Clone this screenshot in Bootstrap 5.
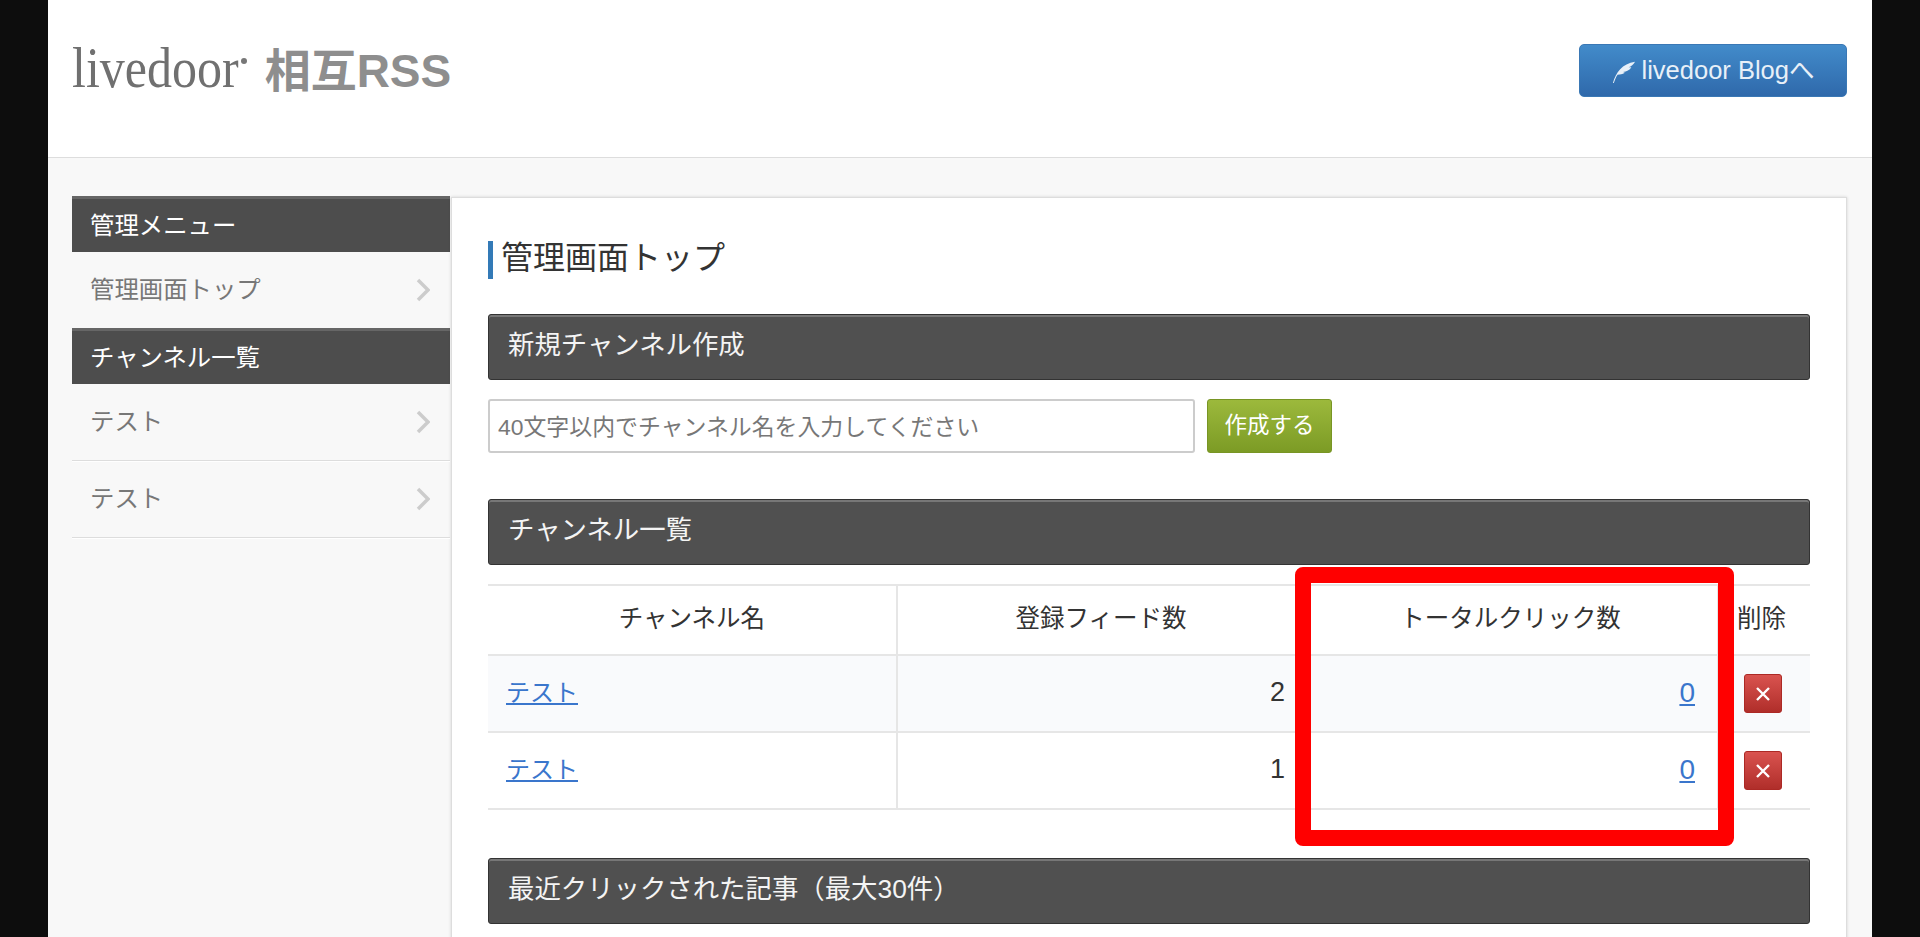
<!DOCTYPE html>
<html lang="ja">
<head>
    <meta charset="UTF-8">
    <meta name="viewport" content="width=device-width, initial-scale=1.0">
    <title>livedoor 相互RSS</title>
    <link href="https://cdn.jsdelivr.net/npm/bootstrap@5.3.0/dist/css/bootstrap.min.css" rel="stylesheet">
    <style>
        html, body {
            height: 100%;
            overflow: hidden;
        }
        body {
            background-color: #0d0d0d;
            color: #333;
            font-family: "Liberation Sans", "Noto Sans CJK JP", sans-serif;
            font-size: 24px;
        }
        .page-wrap {
            margin: 0 48px;
            height: 937px;
            overflow: hidden;
            background-color: #f8f8f8;
        }
        .site-head {
            height: 158px;
            padding: 44px 25px 0 24px;
            background-color: #fff;
            border-bottom: 1px solid #ddd;
        }
        .logo-main {
            display: inline-block;
            font-family: "Liberation Serif", serif;
            font-size: 50px;
            line-height: 50px;
            color: #707070;
            transform: translateY(2px) scaleY(1.15);
            transform-origin: bottom;
        }
        .logo-dot {
            display: inline-block;
            width: 6px;
            height: 6px;
            margin: 0 18px 30px 2px;
            border-radius: 50%;
            background-color: #777;
        }
        .logo-sub {
            margin-bottom: -2px;
            font-family: "Liberation Sans", "Noto Sans CJK JP", sans-serif;
            font-size: 46px;
            line-height: 50px;
            font-weight: 700;
            color: #8e8e8e;
        }
        .blog-btn {
            width: 268px;
            height: 53px;
            gap: 6px;
            padding: 0;
            font-size: 25.5px;
            color: #e8f0f8;
            background: linear-gradient(#428bca, #2f69ab);
            border: 1px solid #3a78b5;
            border-radius: 5px;
        }
        .page-body {
            padding: 38px 25px 0 24px;
        }
        .side-col {
            width: 378px;
            flex-shrink: 0;
        }
        .side-title {
            height: 56px;
            padding: 6px 18px 0;
            font-size: 24.4px;
            line-height: 42px;
            color: #fff;
            background-color: #4d4d4d;
            border-top: 3px solid #666;
        }
        .list-group-flush > .side-item {
            height: 77px;
            padding: 0 20px 0 18px;
            font-size: 24.4px;
            color: #777;
            background: transparent;
            border: 0;
            border-bottom: 1px solid #ddd;
            box-shadow: 0 1px 0 #fff;
        }
        .list-group-flush > .side-item:last-child {
            border-bottom: 1px solid #ddd;
        }
        .list-group-flush > .side-item.no-line {
            height: 76px;
            border-bottom: 0;
            box-shadow: none;
        }
        .main-panel {
            height: 800px;
            margin: 1px 0 0 1px;
            padding: 43px 36px 0;
            background-color: #fff;
            border: 1px solid #ddd;
            box-shadow: 0 0 3px rgba(0, 0, 0, .15);
        }
        .page-title {
            height: 38px;
            margin-bottom: 35px;
            padding-left: 8px;
            font-size: 32px;
            font-weight: 400;
            line-height: 34px;
            color: #333;
            border-left: 5px solid #337ab7;
        }
        .dark-bar {
            height: 66px;
            padding: 0 19px;
            font-size: 26.4px;
            line-height: 60px;
            color: #f4f4f4;
            background-color: #505050;
            border: 1px solid #333;
            border-radius: 3px;
            box-shadow: inset 0 2px 0 #777;
        }
        .name-input {
            width: 707px;
            height: 54px;
            padding: 3px 8px 0;
            font-size: 22.9px;
            border: 2px solid #ccc;
            border-radius: 3px;
        }
        .name-input::placeholder {
            color: #777;
        }
        .make-btn {
            width: 125px;
            height: 54px;
            padding: 0;
            font-size: 22.5px;
            color: #fff;
            background: linear-gradient(#9cb93c, #7c9b25);
            border: 1px solid #789524;
            border-radius: 3px;
        }
        .new-form {
            margin: 19px 0 46px;
        }
        .list-wrap {
            position: relative;
            margin-top: 19px;
            margin-bottom: 48px;
        }
        .chan-table {
            table-layout: fixed;
            margin: 0;
            font-size: 24px;
            --bs-table-color: #333;
            --bs-table-border-color: #e6e6e6;
        }
        .chan-table th, .chan-table td {
            height: 77px;
            padding: 0 18px 2px;
            vertical-align: middle;
            border-bottom: 2px solid #e6e6e6;
        }
        .chan-table th {
            height: 70px;
            font-size: 24.5px;
            font-weight: 400;
            text-align: center;
            border-top: 2px solid #e6e6e6;
        }
        .chan-table th.del-head {
            padding: 0 6px 2px 0;
        }
        .chan-table .line-cell {
            border-right: 2px solid #e6e6e6;
        }
        .chan-table tbody tr:first-child td {
            background-color: #f9fafc;
        }
        .chan-table a {
            color: #3a76cc;
        }
        .chan-table .num-cell {
            padding-right: 19px;
            font-size: 27px;
        }
        .chan-table .click-cell {
            padding-right: 22px;
            font-size: 28px;
        }
        .chan-table .del-cell {
            padding: 0 4px 0 0;
            text-align: center;
        }
        .col-name { width: 409px; }
        .col-feeds { width: 407px; }
        .col-clicks { width: 414px; }
        .del-btn {
            width: 38px;
            height: 39px;
            padding: 0;
            line-height: 1;
            background: linear-gradient(#d9534f, #b02e2a);
            border: 1px solid #ac2925;
            border-radius: 3px;
        }
        .red-frame {
            position: absolute;
            left: 807px;
            top: -17px;
            width: 439px;
            height: 279px;
            border: 16px solid #f00;
            border-radius: 8px;
            pointer-events: none;
        }
    </style>
</head>
<body>
    <div class="page-wrap">
        <!-- ヘッダー -->
        <header class="site-head d-flex justify-content-between align-items-start">
            <div class="d-flex align-items-end">
                <span class="logo-main">livedoor</span>
                <span class="logo-dot"></span>
                <span class="logo-sub">相互RSS</span>
            </div>
            <a href="#" class="btn blog-btn d-flex align-items-center justify-content-center">
                <svg width="24" height="28" viewBox="0 0 26 30"><path d="M1 28C4 17 11 7 25 5c-2 3-4 5-7 6l3 0c-2 3-5 5-9 5l2 1c-3 2-5 2-8 2-2 3-3 6-4 9z" fill="#e8f0f8"/></svg>
                <span>livedoor Blogへ</span>
            </a>
        </header>

        <div class="page-body d-flex align-items-start">
            <!-- サイドメニュー -->
            <aside class="side-col">
                <div class="side-title">管理メニュー</div>
                <div class="list-group list-group-flush">
                    <a href="#" class="list-group-item side-item no-line d-flex justify-content-between align-items-center">
                        <span>管理画面トップ</span>
                        <svg width="14" height="24" viewBox="0 0 14 24"><path d="M2 2l10 10L2 22" fill="none" stroke="#ccc" stroke-width="3.5"/></svg>
                    </a>
                </div>
                <div class="side-title">チャンネル一覧</div>
                <div class="list-group list-group-flush">
                    <a href="#" class="list-group-item side-item d-flex justify-content-between align-items-center">
                        <span>テスト</span>
                        <svg width="14" height="24" viewBox="0 0 14 24"><path d="M2 2l10 10L2 22" fill="none" stroke="#ccc" stroke-width="3.5"/></svg>
                    </a>
                    <a href="#" class="list-group-item side-item d-flex justify-content-between align-items-center">
                        <span>テスト</span>
                        <svg width="14" height="24" viewBox="0 0 14 24"><path d="M2 2l10 10L2 22" fill="none" stroke="#ccc" stroke-width="3.5"/></svg>
                    </a>
                </div>
            </aside>

            <!-- メイン -->
            <main class="main-panel flex-grow-1">
                <h1 class="page-title">管理画面トップ</h1>

                <div class="dark-bar">新規チャンネル作成</div>
                <form class="new-form d-flex gap-2">
                    <input type="text" class="form-control name-input" placeholder="40文字以内でチャンネル名を入力してください">
                    <button type="button" class="btn make-btn ms-1">作成する</button>
                </form>

                <div class="dark-bar">チャンネル一覧</div>
                <div class="list-wrap">
                    <table class="table chan-table">
                        <thead>
                            <tr>
                                <th class="col-name line-cell">チャンネル名</th>
                                <th class="col-feeds">登録フィード数</th>
                                <th class="col-clicks line-cell">トータルクリック数</th>
                                <th class="del-head">削除</th>
                            </tr>
                        </thead>
                        <tbody>
                            <tr>
                                <td class="line-cell"><a href="#">テスト</a></td>
                                <td class="text-end num-cell">2</td>
                                <td class="text-end click-cell line-cell"><a href="#">0</a></td>
                                <td class="del-cell"><button type="button" class="btn del-btn"><svg width="16" height="16" viewBox="0 0 16 16"><path d="M2 2l12 12M14 2L2 14" stroke="#fff" stroke-width="2.4"/></svg></button></td>
                            </tr>
                            <tr>
                                <td class="line-cell"><a href="#">テスト</a></td>
                                <td class="text-end num-cell">1</td>
                                <td class="text-end click-cell line-cell"><a href="#">0</a></td>
                                <td class="del-cell"><button type="button" class="btn del-btn"><svg width="16" height="16" viewBox="0 0 16 16"><path d="M2 2l12 12M14 2L2 14" stroke="#fff" stroke-width="2.4"/></svg></button></td>
                            </tr>
                        </tbody>
                    </table>
                    <div class="red-frame"></div>
                </div>

                <div class="dark-bar">最近クリックされた記事（最大30件）</div>
            </main>
        </div>
    </div>
    <script src="https://cdn.jsdelivr.net/npm/bootstrap@5.3.0/dist/js/bootstrap.bundle.min.js"></script>
</body>
</html>
